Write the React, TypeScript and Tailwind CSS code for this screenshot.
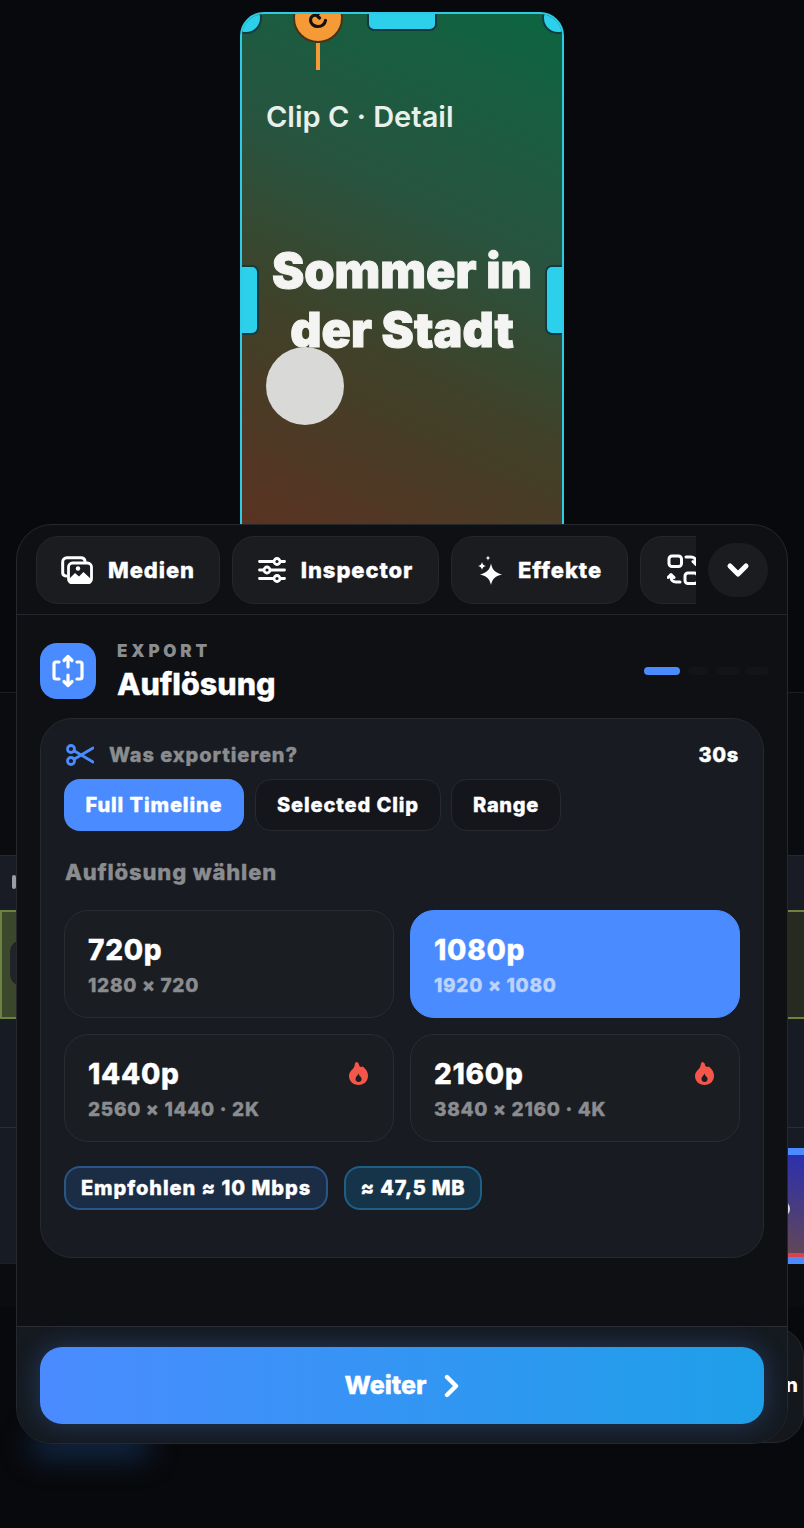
import React from 'react';
import { ChevronDown } from 'lucide-react';

const FONT = "font-['Inter','Noto_Sans',sans-serif]";
// the reference text is a touch heavier than the installed Inter at this weight
const HEAVY = 'font-extrabold [-webkit-text-stroke:0.35px_currentColor]';

const MediaIcon = () => (
  <svg width="32" height="28" viewBox="0 0 32 28" fill="none">
    <path d="M5 20c-2-.2-3.300-1.600-3.300-3.500V6c0-2.400 1.700-4.300 4.300-4.300h14c2.200 0 3.700 1.200 4 3.300" stroke="white" strokeWidth="3" strokeLinecap="round" />
    <rect x="7.500" y="7" width="23" height="20" rx="4" stroke="white" strokeWidth="2.800" />
    <path d="M8 23l6-6 4 3.600 4.400-4.600 7.600 7V24c0 2-1.400 3-3 3H11c-1.800 0-3-1.400-3-3z" fill="white" />
    <circle cx="17" cy="12.500" r="2.200" fill="white" />
  </svg>
);

const SlidersIcon = () => (
  <svg width="28" height="26" viewBox="0 0 28 26" fill="#1a1c20" stroke="white" strokeWidth="2.800" strokeLinecap="round">
    <path d="M1.500 4.500h25M1.500 13h25M1.500 21.500h25" />
    <circle cx="19" cy="4.500" r="3" />
    <circle cx="9" cy="13" r="3" />
    <circle cx="19" cy="21.500" r="3" />
  </svg>
);

const SparkIcon = () => (
  <svg width="26" height="30" viewBox="0 0 26 30" fill="white">
    <path d="M14 8.500c1.200 6 3.800 9.200 11 11-7.200 1.800-9.800 4.700-11 10.500-1.200-5.800-3.800-8.700-11-10.500 7.200-1.800 9.800-5 11-11z" />
    <path d="M5 7c.5 2.500 1.500 3.500 4 4-2.500.5-3.500 1.500-4 4-.5-2.500-1.500-3.500-4-4 2.500-.5 3.500-1.500 4-4z" />
    <path d="M11 .5c.3 1.700.9 2.300 2.500 2.600-1.600.3-2.200.9-2.500 2.600-.3-1.700-.9-2.300-2.500-2.600 1.600-.3 2.200-.9 2.500-2.600z" />
  </svg>
);

const SwapIcon = () => (
  <svg width="32" height="32" viewBox="0 0 32 32" fill="none" stroke="white" strokeWidth="3" strokeLinecap="round" strokeLinejoin="round">
    <rect x="2" y="2" width="12.500" height="10.500" rx="3" />
    <rect x="18" y="19" width="12.500" height="10.500" rx="3" />
    <path d="M19 3h5c3 0 5 2 5 5v2M26 7.500L29 10.500 32 7.500" />
    <path d="M13 28H9c-3 0-5-2-5-5v-2M1 23.500L4 20.500 7 23.500" />
  </svg>
);

const ExportIcon = () => (
  <svg width="34" height="34" viewBox="0 0 34 34" fill="none" stroke="white" strokeWidth="3.200" strokeLinecap="round" strokeLinejoin="round">
    <path d="M8 8H5c-1.200 0-2 .8-2 2v13c0 1.200.8 2 2 2h3" />
    <path d="M26 8h3c1.200 0 2 .8 2 2v13c0 1.200-.8 2-2 2h-3" />
    <path d="M17 13V2.500M13 6.500L17 2.500l4 4" />
    <path d="M17 21v10.500M13 27.500L17 31.500l4-4" />
  </svg>
);

const ScissorsIcon = () => (
  <svg width="28" height="22" viewBox="0 0 28 22" fill="none" stroke="#4a8bff" strokeWidth="2.800" strokeLinecap="round">
    <circle cx="5" cy="5" r="3.500" />
    <circle cx="5" cy="17" r="3.500" />
    <path d="M8 6.800L27 18M8 15.200L27 4" />
  </svg>
);

const RotateHook = () => (
  <svg width="20" height="18" viewBox="0 0 20 18" fill="none" stroke="#14110c" strokeWidth="3.200" strokeLinecap="round" strokeLinejoin="round">
    <path d="M17.500 9.500c-.8 3.600-3.800 6-7.500 6-4 0-7.500-2.700-7.500-6.500 0-3 2.500-5 6.500-5" />
    <path d="M12 1L8.500 4.300 11.500 7" />
  </svg>
);

const WeiterChevron = () => (
  <svg width="16" height="24" viewBox="0 0 16 24" fill="none" stroke="white" strokeWidth="4.400" strokeLinecap="round" strokeLinejoin="round">
    <path d="M3 3l9 9-9 9" />
  </svg>
);

const Flame = () => (
  <svg width="19" height="23" viewBox="0 0 19 23" fill="#f4574a">
    <path fillRule="evenodd" d="M7 0c1.500 0 2.800 1 3 2.800.3 2 2 2.700 3.800 1.700C16.800 7 19 9.500 19 14c0 5-4 9-9.500 9S0 19 0 14C0 9 5 7 5.500 4 5.700 2.500 6 1 7 0zm2.700 11.500C8.500 14 6.500 14.500 6.500 17c0 1.800 1.400 3 3.100 3s3-1.300 3-3.100c0-1.600-1.300-2.500-2-3-.4-.8-.5-1.500-.9-2.400z" />
  </svg>
);

const TABS = [
  { label: 'Medien', width: 'w-[184px]', icon: <MediaIcon /> },
  { label: 'Inspector', width: 'w-[207px]', icon: <SlidersIcon /> },
  { label: 'Effekte', width: 'w-[177px]', icon: <SparkIcon /> },
];

const RESOLUTIONS = [
  { name: '720p', size: '1280 × 720' },
  { name: '1080p', size: '1920 × 1080', active: true },
  { name: '1440p', size: '2560 × 1440 · 2K', hot: true },
  { name: '2160p', size: '3840 × 2160 · 4K', hot: true },
];

const Handle = ({ className }: { className: string }) => (
  <div className={`absolute bg-[#2dd0ea] border-2 border-[#123a40] ${className}`} />
);

function Preview() {
  return (
    <div className="h-[524px] overflow-hidden pt-3 flex justify-center">
      <div className="relative w-[324px] h-[560px] shrink-0 rounded-[24px] border-2 border-[#2dcbe6] overflow-hidden bg-[linear-gradient(205deg,#0c6540_0%,#28543f_36%,#3f4229_60%,#5f2f20_100%)]">
        <Handle className="-left-3 -top-3 w-[32px] h-[32px] rounded-full" />
        <Handle className="-right-3 -top-3 w-[32px] h-[32px] rounded-full" />
        <Handle className="left-[125px] -top-3 w-[70px] h-[29px] rounded-[7px]" />
        <Handle className="-left-2 top-[251px] w-[25px] h-[70px] rounded-[7px]" />
        <Handle className="-right-2 top-[251px] w-[25px] h-[70px] rounded-[7px]" />
        {/* rotate handle, cut by the frame */}
        <div className="absolute left-[51px] -top-[21px] w-[50px] h-[50px] rounded-full bg-[#f59a36] border-2 border-[#4a3217] flex items-end justify-center pb-[12px]">
          <RotateHook />
        </div>
        <div className="absolute left-[74px] top-[29px] w-[4px] h-[27px] bg-[#f59a36]" />
        <div className="pt-[86px] pl-[24px] text-[29px] leading-[34px] font-semibold text-[#e9f0ea]">Clip C · Detail</div>
        <div className="mt-[107px] text-center text-[48.500px] leading-[59px] font-black [-webkit-text-stroke:1px_#f4f4f2] text-[#f4f4f2]">
          Sommer in<br />der Stadt
        </div>
        <div className="absolute left-[24px] top-[333px] w-[78px] h-[78px] rounded-full bg-[#d9d9d7]" />
      </div>
    </div>
  );
}

function Timeline() {
  return (
    <div className="flex flex-col">
      <div className="h-[168px]" />
      <div className="h-[163px] bg-[#0a0c10] border-t border-[#1c1f24]" />
      <div className="relative h-[55px] bg-[#191c25] border-t border-[#26292e]">
        <div className="absolute left-[12px] top-[19px] w-[4px] h-[14px] rounded-sm bg-[#9a9da3]" />
      </div>
      <div className="relative h-[109px] border-y-2 border-l-2 border-[#6f8340] bg-[linear-gradient(90deg,#3b482b_0%,#262a20_100%)]">
        <div className="absolute left-[8px] top-[28px] w-[30px] h-[46px] rounded-[12px] bg-[#20242a]" />
      </div>
      <div className="h-[108px] bg-[#171b24]" />
      <div className="h-[136px] bg-[#171b24] border-t border-[#2b2e33] flex justify-end pt-[20px]">
        <div className="relative w-[40px] h-[116px] overflow-hidden border-t-[7px] border-b-[7px] border-[#4a8bff] bg-[linear-gradient(200deg,#2a2fb0_0%,#6a4a4a_100%)]">
          <span className="absolute left-[-1px] top-[9px] text-[7px] font-bold text-white">Detail</span>
          <div className="absolute left-[10px] top-[46px] w-[16px] h-[16px] rounded-full bg-[#d9d9d7]" />
          <div className="absolute left-0 bottom-0 w-full h-[4px] bg-[#d8434f]" />
        </div>
      </div>
      <div className="h-[44px] bg-[#0a0c10] border-t border-[#1c1f24]" />
    </div>
  );
}

function Panel() {
  return (
    <div className="absolute left-[16px] top-[524px] w-[772px] h-[920px] rounded-[36px] border border-[#25282d] bg-[#0e1014] flex flex-col overflow-hidden">
      <div className="relative h-[90px] shrink-0 border-b border-[#24272c] pt-[11px] pl-[19px]">
        <div className="w-[660px] overflow-hidden flex gap-3">
          {TABS.map((t) => (
            <div key={t.label} className={`${t.width} h-[68px] shrink-0 rounded-[22px] bg-[#1a1c20] border border-[#25272b] flex items-center justify-center gap-[15px]`}>
              {t.icon}
              <span className={`text-[22px] ${HEAVY} tracking-[0.9px] text-white`}>{t.label}</span>
            </div>
          ))}
          <div className="w-[120px] h-[68px] shrink-0 rounded-[22px] bg-[#1a1c20] border border-[#25272b] flex items-center pl-[26px]">
            <SwapIcon />
          </div>
        </div>
        <div className="absolute right-[19px] top-[18px] w-[60px] h-[54px] rounded-full bg-[#1a1c20] flex items-center justify-center">
          <ChevronDown size={32} color="white" strokeWidth={3.800} />
        </div>
      </div>

      <div className="flex items-center h-[103px] shrink-0 pt-[9px] pl-[23px] pr-[18px]">
        <div className="w-[56px] h-[56px] rounded-[17px] bg-[#4a8bff] flex items-center justify-center">
          <ExportIcon />
        </div>
        <div className="ml-[21px] flex-1">
          <div className="text-[17px] leading-[20px] font-black tracking-[3.800px] text-[#8a8c90]">EXPORT</div>
          <div className={`text-[30.500px] leading-[36px] mt-[5px] ${HEAVY} text-white`}>Auflösung</div>
        </div>
        <div className="flex gap-2 items-center">
          <div className="w-[36px] h-[8px] rounded-full bg-[#4a8bff]" />
          <div className="w-[20px] h-[8px] rounded-full bg-[#121418]" />
          <div className="w-[24px] h-[8px] rounded-full bg-[#121418]" />
          <div className="w-[24px] h-[8px] rounded-full bg-[#121418] -ml-[3px]" />
        </div>
      </div>

      <div className="mx-[23px] h-[540px] shrink-0 rounded-[32px] border border-[#26292e] bg-[#181b21] px-[23px] pt-[23px]">
        <div className="flex items-center h-[26px]">
          <span className="ml-[2px]"><ScissorsIcon /></span>
          <span className={`ml-[15px] text-[20px] ${HEAVY} tracking-[0.9px] text-[#8a8c90]`}>Was exportieren?</span>
          <span className={`ml-auto mr-[1px] text-[20px] ${HEAVY} tracking-[0.7px] text-white`}>30s</span>
        </div>
        <div className="flex gap-[10px] mt-[11px]">
          <div className={`w-[180px] h-[52px] rounded-[16px] bg-[#4a8bff] flex items-center justify-center text-[20px] ${HEAVY} tracking-[0.9px] text-white`}>Full Timeline</div>
          <div className={`ml-[1px] w-[186px] h-[52px] rounded-[16px] bg-[#14161b] border border-[#26292e] flex items-center justify-center text-[20px] ${HEAVY} tracking-[0.9px] text-white`}>Selected Clip</div>
          <div className={`w-[110px] h-[52px] rounded-[16px] bg-[#14161b] border border-[#26292e] flex items-center justify-center text-[20px] ${HEAVY} tracking-[0.7px] text-white`}>Range</div>
        </div>
        <div className={`mt-[27px] ml-[1px] h-[28px] leading-[28px] text-[22px] ${HEAVY} tracking-[0.85px] text-[#8a8c90]`}>Auflösung wählen</div>
        <div className="grid grid-cols-2 gap-4 mt-[24px] w-[676px]">
          {RESOLUTIONS.map((r) => (
            <div key={r.name} className={`relative h-[108px] rounded-[24px] border pl-[23px] pt-[22px] ${r.active ? 'bg-[#4a8bff] border-[#4a8bff]' : 'bg-[#1a1d22] border-[#292c31]'}`}>
              <div className={`text-[28px] leading-[34px] ${HEAVY} tracking-[0.7px] text-white`}>{r.name}</div>
              <div className={`mt-[7px] text-[19px] leading-[24px] ${HEAVY} tracking-[0.7px] ${r.active ? 'text-[#bcd3fb]' : 'text-[#8a8c90]'}`}>{r.size}</div>
              {r.hot && <div className="absolute right-[25px] top-[27px]"><Flame /></div>}
            </div>
          ))}
        </div>
        <div className="flex gap-4 mt-[24px]">
          <div className={`w-[264px] h-[44px] rounded-[16px] bg-[#1b2d45] border-2 border-[#2a5587] flex items-center justify-center text-[20px] ${HEAVY} tracking-[0.95px] text-white`}>Empfohlen ≈ 10 Mbps</div>
          <div className={`w-[138px] h-[44px] rounded-[16px] bg-[#153449] border-2 border-[#1d5f85] flex items-center justify-center text-[20px] ${HEAVY} tracking-[0.8px] text-white`}>≈ 47,5 MB</div>
        </div>
      </div>

      <div className="flex-1 mt-[68px] border-t border-[#2a2d32] bg-[#151a20] px-[23px] pt-[20px]">
        <div className="h-[77px] rounded-[22px] bg-[linear-gradient(90deg,#4a8bff_0%,#1e9fe8_100%)] shadow-[0_0_26px_rgba(74,139,255,0.28)] flex items-center justify-center gap-[17px]">
          <span className={`text-[25px] ${HEAVY} text-white`}>Weiter</span>
          <WeiterChevron />
        </div>
      </div>
    </div>
  );
}

export default function App() {
  return (
    <div className={`relative h-[1528px] w-[804px] overflow-hidden bg-[#08090c] ${FONT}`}>
      <Preview />
      <Timeline />
      {/* next button of the row behind the panel */}
      <div className="absolute left-[700px] top-[1327px] w-[104px] h-[116px] rounded-r-[30px] bg-[#14171c] border border-[#25282d] flex items-center justify-end pr-[5px] text-[20px] font-extrabold text-white">n</div>
      <div className="absolute left-[30px] top-[1432px] w-[120px] h-[26px] rounded-full bg-[#12294a] blur-[14px]" />
      <Panel />
    </div>
  );
}
